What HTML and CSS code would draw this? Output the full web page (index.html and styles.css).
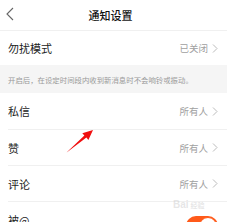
FILE: index.html
```html
<!DOCTYPE html>
<html lang="zh-CN">
<head>
<meta charset="utf-8">
<title>通知设置</title>
<link rel="stylesheet" href="styles.css">
</head>
<body>
<div class="page">
  <header class="header">
    <svg class="back" width="20" height="30" viewBox="0 0 20 30"><polyline points="13,8 7,14 13,20" fill="none" stroke="#666" stroke-width="1.1"/></svg>
    <div class="title">通知设置</div>
    <div class="spacer"></div>
  </header>
  <div class="row first">
    <span class="label">勿扰模式</span>
    <span class="value">已关闭<svg class="chev" width="6" height="9" viewBox="0 0 6 9"><polyline points="1,0.5 5,4.5 1,8.5" fill="none" stroke="#bbb" stroke-width="1"/></svg></span>
  </div>
  <div class="note">开启后，在设定时间段内收到新消息时不会响铃或振动。</div>
  <div class="row line tall">
    <span class="label">私信</span>
    <span class="value">所有人<svg class="chev" width="6" height="9" viewBox="0 0 6 9"><polyline points="1,0.5 5,4.5 1,8.5" fill="none" stroke="#bbb" stroke-width="1"/></svg></span>
  </div>
  <div class="row line">
    <span class="label">赞</span>
    <span class="value">所有人<svg class="chev" width="6" height="9" viewBox="0 0 6 9"><polyline points="1,0.5 5,4.5 1,8.5" fill="none" stroke="#bbb" stroke-width="1"/></svg></span>
  </div>
  <div class="row line">
    <span class="label">评论</span>
    <span class="value">所有人<svg class="chev" width="6" height="9" viewBox="0 0 6 9"><polyline points="1,0.5 5,4.5 1,8.5" fill="none" stroke="#bbb" stroke-width="1"/></svg></span>
  </div>
  <div class="row">
    <span class="label">被@</span>
    <span class="toggle"><span class="knob"></span></span>
  </div>
  <div class="watermark">Bai<span class="wm-cn">经验</span></div>
  <svg class="arrow" width="227" height="222" viewBox="0 0 227 222"><polygon points="66,153 84.4,135.4 82.3,133.2 93,130 88.4,140 86.4,137.6" fill="#f01010"/></svg>
</div>
</body>
</html>
```
FILE: styles.css
```css
* { box-sizing: border-box; }
html, body { margin: 0; padding: 0; background: #fff; }
body { font-family: "Noto Sans CJK SC", "Noto Sans", sans-serif; color: #222; }
.page { position: relative; width: 227px; height: 222px; overflow: hidden; }
.header {
  height: 31px;
  display: grid;
  grid-template-columns: 20px 1fr 20px;
  align-items: center;
  border-bottom: 1px solid #f0f0f0;
}
.back { display: block; }
.title { text-align: center; font-size: 11px; font-weight: 500; color: #111; line-height: 30px; margin-left: -6px; }
.row {
  display: flex;
  justify-content: space-between;
  align-items: center;
  margin-left: 8px;
  padding-right: 9px;
  height: 35px;
}
.row.first { height: 34px; }
.row.line { height: 36px; border-bottom: 1px solid #f0f0f0; }
.row.tall { height: 37px; }
.label { font-size: 11px; color: #222; }
.value { display: flex; align-items: center; gap: 4px; font-size: 9.5px; color: #a0a0a0; }
.chev { display: block; }
.note {
  height: 28px;
  background: #f5f5f5;
  display: flex;
  align-items: center;
  padding-left: 8px;
  font-size: 7.4px;
  color: #9a9a9a;
  white-space: nowrap;
}
.toggle {
  position: relative;
  width: 32px;
  height: 20px;
  border-radius: 10px;
  background: #ff5a1a;
  margin-top: 12px;
  display: flex;
  justify-content: flex-end;
  align-items: center;
  padding-right: 1px;
}
.knob {
  width: 18px;
  height: 18px;
  border-radius: 50%;
  background: #fff;
  border: 1.5px solid #ff5a1a;
}
.watermark {
  position: absolute;
  left: 173px;
  top: 199px;
  font-family: "Liberation Sans", sans-serif;
  font-size: 10px;
  font-weight: bold;
  color: rgba(200,200,200,0.45);
}
.wm-cn { font-family: "Noto Sans CJK SC", sans-serif; font-size: 7px; margin-left: 2px; }
.arrow { position: absolute; left: 0; top: 0; pointer-events: none; }
```
